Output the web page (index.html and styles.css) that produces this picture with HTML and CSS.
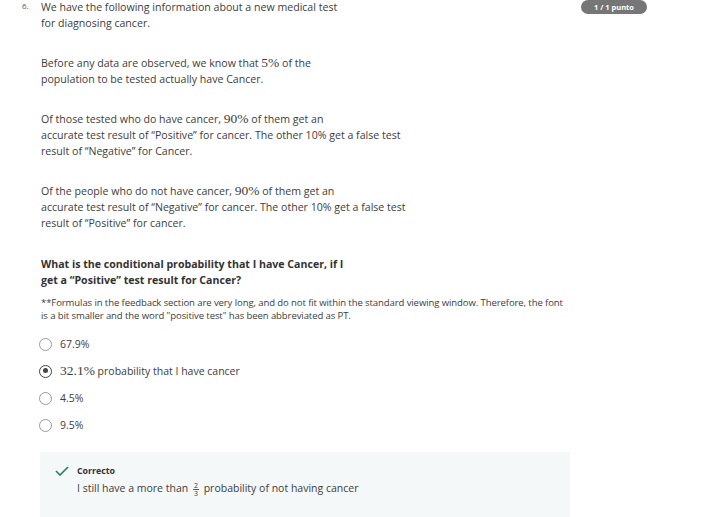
FILE: index.html
```html
<!DOCTYPE html>
<html>
<head>
<meta charset="utf-8">
<link rel="stylesheet" href="styles.css">
</head>
<body>
<div class="page">
  <div class="question">
    <div class="num">6.</div>
    <div class="content">
      <p class="para">We have the following information about a new medical test<br>for diagnosing cancer.</p>
      <p class="para">Before any data are observed, we know that <span class="math">5%</span> of the<br>population to be tested actually have Cancer.</p>
      <p class="para">Of those tested who do have cancer, <span class="math">90%</span> of them get an<br>accurate test result of “Positive” for cancer. The other 10% get a false test<br>result of “Negative” for Cancer.</p>
      <p class="para">Of the people who do not have cancer, <span class="math">90%</span> of them get an<br>accurate test result of “Negative” for cancer. The other 10% get a false test<br>result of “Positive” for cancer.</p>
      <p class="prompt">What is the conditional probability that I have Cancer, if I<br>get a “Positive” test result for Cancer?</p>
      <p class="note">**Formulas in the feedback section are very long, and do not fit within the standard viewing window. Therefore, the font<br>is a bit smaller and the word "positive test" has been abbreviated as PT.</p>
      <div class="options">
        <label class="option"><span class="radio"></span><span class="opt-text">67.9%</span></label>
        <label class="option"><span class="radio checked"></span><span class="opt-text"><span class="math">32.1%</span> probability that I have cancer</span></label>
        <label class="option"><span class="radio"></span><span class="opt-text">4.5%</span></label>
        <label class="option"><span class="radio"></span><span class="opt-text">9.5%</span></label>
      </div>
      <div class="feedback">
        <svg class="check" width="14" height="10" viewBox="0 0 14 10"><path d="M1 5 L5 9 L13 1" fill="none" stroke="#1f8354" stroke-width="1.6"/></svg>
        <div class="fb-body">
          <div class="fb-title">Correcto</div>
          <div class="fb-text">I still have a more than <span class="frac"><span class="fn">2</span><span class="fd">3</span></span> probability of not having cancer</div>
        </div>
      </div>
    </div>
  </div>
  <div class="badge">1 / 1 punto</div>
</div>
</body>
</html>
```
FILE: styles.css
```css
html, body {
  margin: 0;
  padding: 0;
  background: #fff;
}
body {
  font-family: "Open Sans", "Liberation Sans", sans-serif;
  color: #3d3d3d;
}
.page {
  position: relative;
  width: 704px;
  height: 517px;
  overflow: hidden;
}
.question {
  display: flex;
  padding-left: 22px;
}
.num {
  width: 19px;
  font-size: 8px;
  line-height: 12px;
  color: #555;
}
.content {
  width: 531px;
}
.para {
  margin: 0 0 24px 0;
  font-size: 10.6px;
  line-height: 16px;
}
.para:first-child {
  margin-top: -1px;
}
.math {
  font-family: "Liberation Serif", "DejaVu Serif", serif;
  font-size: 13.5px;
  line-height: 10px;
}
.prompt {
  margin: 0 0 8px 0;
  padding-top: 1px;
  font-size: 10.6px;
  line-height: 16px;
  font-weight: 700;
  color: #333;
}
.note {
  margin: 0 0 15px 0;
  font-size: 9.55px;
  line-height: 13px;
  letter-spacing: -0.1px;
}
.options {
  display: flex;
  flex-direction: column;
  gap: 13px;
  padding-left: 0;
}
.option {
  display: flex;
  align-items: center;
  gap: 8px;
  height: 14px;
  font-size: 10.5px;
}
.radio {
  box-sizing: border-box;
  width: 13px;
  height: 13px;
  border: 1px solid #9a9a9a;
  border-radius: 50%;
  position: relative;
  margin-left: -2px;
  flex: none;
}
.radio.checked {
  border: 1.5px solid #444;
}
.radio.checked::after {
  content: "";
  position: absolute;
  left: 2.5px;
  top: 2.5px;
  width: 5px;
  height: 5px;
  border-radius: 50%;
  background: #444;
}
.feedback {
  margin-top: 20px;
  margin-left: -1px;
  background: #f5f8f8;
  height: 80px;
  display: flex;
  align-items: flex-start;
  padding: 13px 0 0 15px;
  gap: 8px;
  box-sizing: border-box;
  width: 530px;
}
.check {
  margin-top: 1px;
}
.fb-title {
  font-size: 8.8px;
  font-weight: 700;
  line-height: 12px;
  color: #333;
}
.fb-text {
  font-size: 10.5px;
  line-height: 16px;
  margin-top: 3px;
}
.frac {
  display: inline-flex;
  flex-direction: column;
  align-items: center;
  vertical-align: middle;
  font-size: 7px;
  line-height: 7px;
  margin: 0 2px;
}
.fn {
  border-bottom: 0.7px solid #555;
  padding: 0 1px;
}
.badge {
  position: absolute;
  top: 0;
  left: 581px;
  width: 66px;
  height: 14px;
  border-radius: 7px;
  background: #767676;
  color: #fff;
  font-size: 7.5px;
  font-weight: 700;
  line-height: 14px;
  text-align: center;
}
```
